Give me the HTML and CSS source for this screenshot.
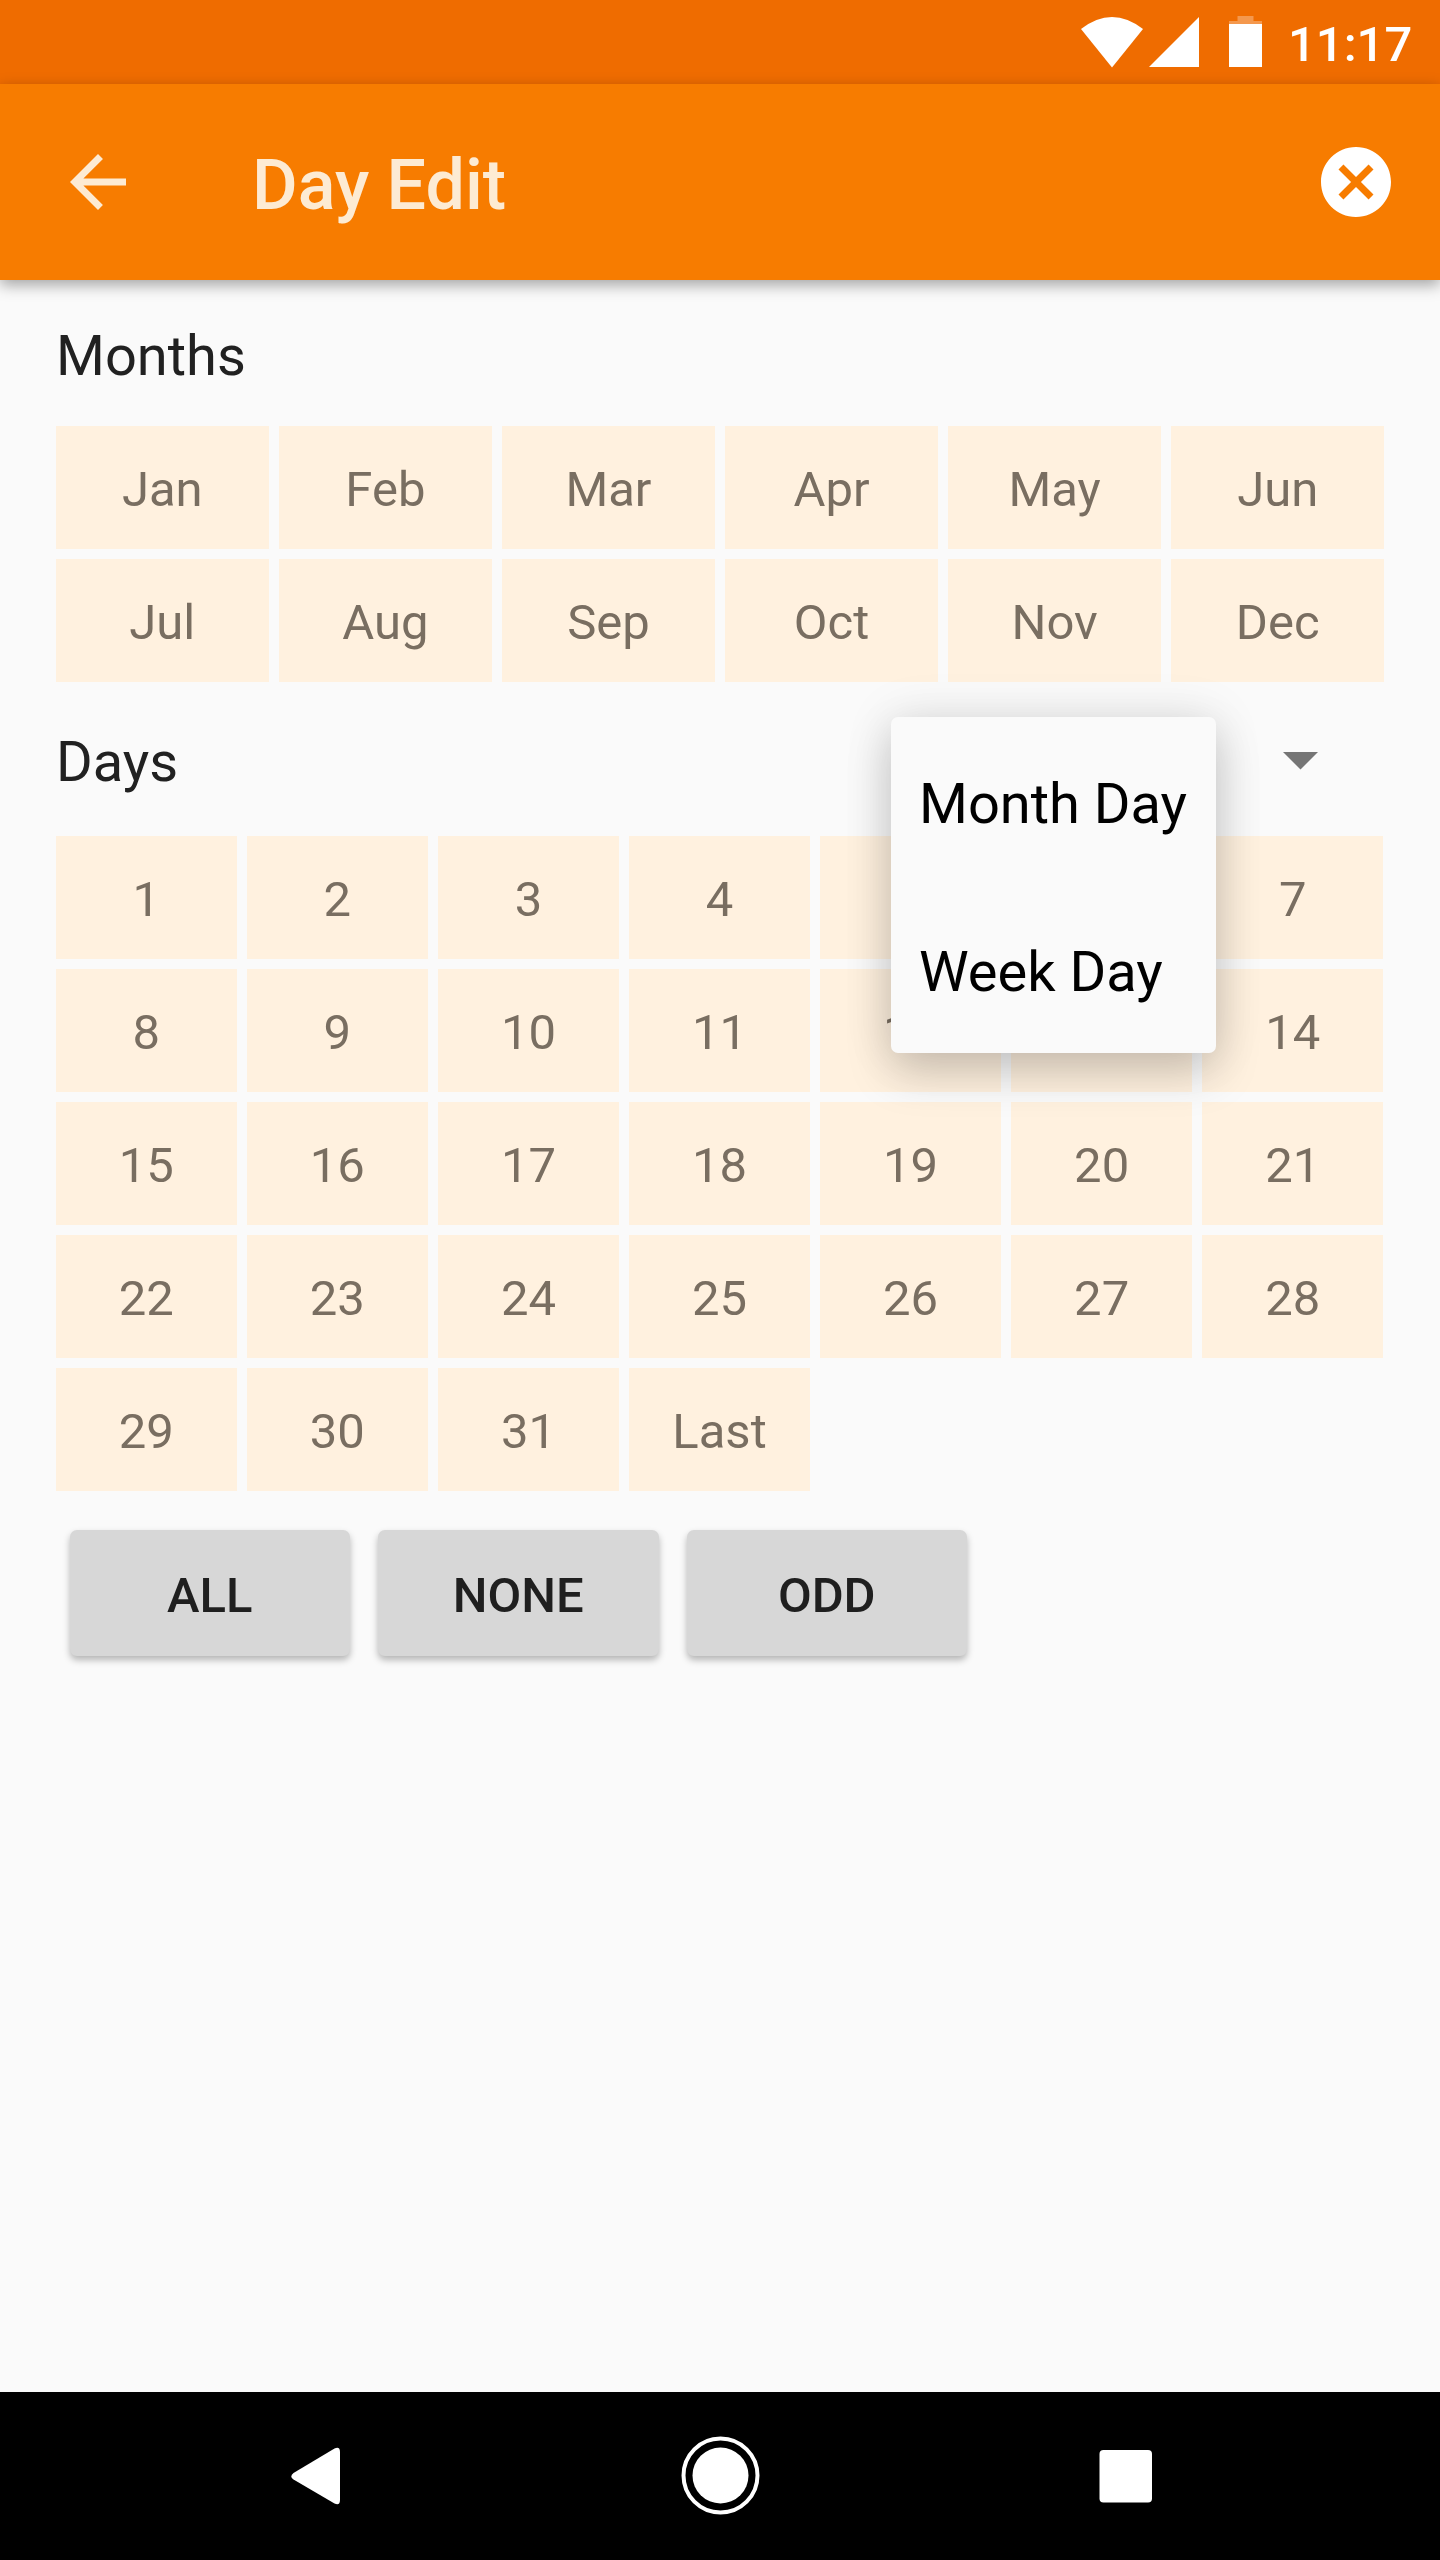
FILE: index.html
```html
<!DOCTYPE html>
<html lang="en">
<head>
<meta charset="utf-8">
<title>Day Edit</title>
<link rel="stylesheet" href="styles.css">
</head>
<body>
<div class="screen">
  <div class="status-bar">
    <svg class="wifi" width="64" height="52" viewBox="0 0 64 52"><path d="M1 12Q32-12 63 12L32 50.500Z"/></svg>
    <svg class="signal" width="50" height="50" viewBox="0 0 50 50"><path d="M50 0V50H0Z"/></svg>
    <svg class="battery" width="33" height="51" viewBox="0 0 33 51"><path opacity=".3" d="M8.500 0H24.500V5H33V8H0V5H8.500Z"/><path d="M0 8H33V51H0Z"/></svg>
    <span class="clock">11:17</span>
  </div>
  <header class="app-bar">
    <svg class="back" width="84" height="84" viewBox="0 0 24 24"><path d="M20 11H7.830l5.590-5.590L12 4l-8 8 8 8 1.410-1.410L7.830 13H20z"/></svg>
    <h1 class="title">Day Edit</h1>
    <svg class="cancel" width="84" height="84" viewBox="0 0 24 24"><path d="M12 2C6.470 2 2 6.470 2 12s4.470 10 10 10 10-4.470 10-10S17.530 2 12 2zm5 13.590L15.590 17 12 13.410 8.410 17 7 15.590 10.590 12 7 8.410 8.410 7 12 10.590 15.590 7 17 8.410 13.410 12z"/></svg>
  </header>
  <main class="content">
    <h2 class="label">Months</h2>
    <div class="grid months">
      <div class="cell">Jan</div><div class="cell">Feb</div><div class="cell">Mar</div><div class="cell">Apr</div><div class="cell">May</div><div class="cell">Jun</div>
      <div class="cell">Jul</div><div class="cell">Aug</div><div class="cell">Sep</div><div class="cell">Oct</div><div class="cell">Nov</div><div class="cell">Dec</div>
    </div>
    <div class="days-head">
      <h2 class="label">Days</h2>
      <svg class="caret" width="35" height="18" viewBox="0 0 35 18"><path d="M0 0H35L17.500 17.500Z"/></svg>
      <div class="menu">
        <div class="menu-item">Month Day</div>
        <div class="menu-item">Week Day</div>
      </div>
    </div>
    <div class="grid days">
      <div class="cell">1</div><div class="cell">2</div><div class="cell">3</div><div class="cell">4</div><div class="cell">5</div><div class="cell">6</div><div class="cell">7</div>
      <div class="cell">8</div><div class="cell">9</div><div class="cell">10</div><div class="cell">11</div><div class="cell">12</div><div class="cell">13</div><div class="cell">14</div>
      <div class="cell">15</div><div class="cell">16</div><div class="cell">17</div><div class="cell">18</div><div class="cell">19</div><div class="cell">20</div><div class="cell">21</div>
      <div class="cell">22</div><div class="cell">23</div><div class="cell">24</div><div class="cell">25</div><div class="cell">26</div><div class="cell">27</div><div class="cell">28</div>
      <div class="cell">29</div><div class="cell">30</div><div class="cell">31</div><div class="cell">Last</div>
    </div>
    <div class="actions">
      <button class="button">ALL</button>
      <button class="button">NONE</button>
      <button class="button">ODD</button>
    </div>
  </main>
  <nav class="nav-bar">
    <svg class="nav-icon" width="80" height="80" viewBox="0 0 80 80"><path d="M17.500 38L58.500 13.500Q64 11 64 17V65Q64 71 58.500 68.500L17.500 44.500Q13 41.500 17.500 38Z"/></svg>
    <svg class="nav-icon" width="80" height="80" viewBox="0 0 80 80"><circle cx="39.500" cy="40.500" r="37" fill="none" stroke="#fff" stroke-width="4"/><circle cx="39.500" cy="40.500" r="28"/></svg>
    <svg class="nav-icon" width="80" height="80" viewBox="0 0 80 80"><rect x="13.500" y="15" width="52.500" height="52.500" rx="4"/></svg>
  </nav>
</div>
</body>
</html>
```
FILE: styles.css
```css
* { box-sizing: border-box; }

body {
  margin: 0;
  font-family: Roboto, "Liberation Sans", sans-serif;
  color: #212121;
  background: #fafafa;
}

h1, h2 { margin: 0; }
svg { display: block; flex: none; fill: #fff; }

.screen {
  display: flex;
  flex-direction: column;
  width: 1440px;
  height: 2560px;
  background: #fafafa;
}

.status-bar {
  display: flex;
  align-items: flex-start;
  justify-content: flex-end;
  height: 84px;
  padding: 17px 28px 0 0;
  background: #ef6c00;
}

.signal { margin-left: 5px; }
.battery { margin: -1px 26px 0 30px; }

.clock {
  width: 124px;
  margin-top: -1px;
  font-size: 49px;
  font-weight: 500;
  line-height: 58px;
  color: #fff;
  white-space: nowrap;
}

.app-bar {
  display: flex;
  align-items: center;
  height: 196px;
  padding: 0 42px 0 56px;
  background: #f77c00;
  box-shadow: 0 5px 14px rgba(0, 0, 0, .35);
}

.back { fill: #fdebd3; }

.title {
  flex: 1;
  margin-left: 112px;
  padding-top: 6px;
  font-size: 70px;
  font-weight: 500;
  line-height: 82px;
  color: #fdebd3;
}

.content {
  flex: 1;
  padding: 43px 56px 0;
}

.label {
  font-size: 56px;
  font-weight: 400;
  line-height: 66px;
}

.grid {
  display: grid;
  grid-auto-rows: 122.5px;
  gap: 10.5px;
}

.months {
  grid-template-columns: repeat(6, 1fr);
  margin-top: 37px;
}

.days {
  grid-template-columns: repeat(7, 1fr);
  margin-right: 1px;
}

.cell {
  display: flex;
  align-items: center;
  justify-content: center;
  padding-top: 5px;
  font-size: 49px;
  line-height: 58px;
  color: #796e61;
  background: #fff1df;
}

.days-head {
  position: relative;
  display: flex;
  align-items: flex-start;
  justify-content: space-between;
  height: 154.5px;
  padding: 47px 66px 0 0;
}

.caret {
  margin-top: 23px;
  fill: #757575;
}

.menu {
  position: absolute;
  z-index: 1;
  top: 35px;
  left: 835px;
  width: 325px;
  height: 336px;
  border-radius: 7px;
  background: #fafafa;
  box-shadow: 0 20px 46px rgba(0, 0, 0, .18), 0 0 50px rgba(0, 0, 0, .1);
}

.menu-item {
  padding: 54px 0 48px 28px;
  font-size: 56px;
  line-height: 66px;
  color: #000;
  white-space: nowrap;
}

.actions {
  display: flex;
  gap: 28px;
  padding: 39.5px 0 0 13.5px;
}

.button {
  width: 280.5px;
  height: 126px;
  padding: 5px 0 0;
  border: 0;
  border-radius: 7px;
  font: 500 49px/58px Roboto, "Liberation Sans", sans-serif;
  color: #1f1f1f;
  background: #d7d7d7;
  box-shadow: 0 4px 7px rgba(0, 0, 0, .28);
}

.nav-bar {
  display: flex;
  justify-content: space-between;
  height: 168px;
  padding: 43px 274px 0 276px;
  background: #000;
}
```
